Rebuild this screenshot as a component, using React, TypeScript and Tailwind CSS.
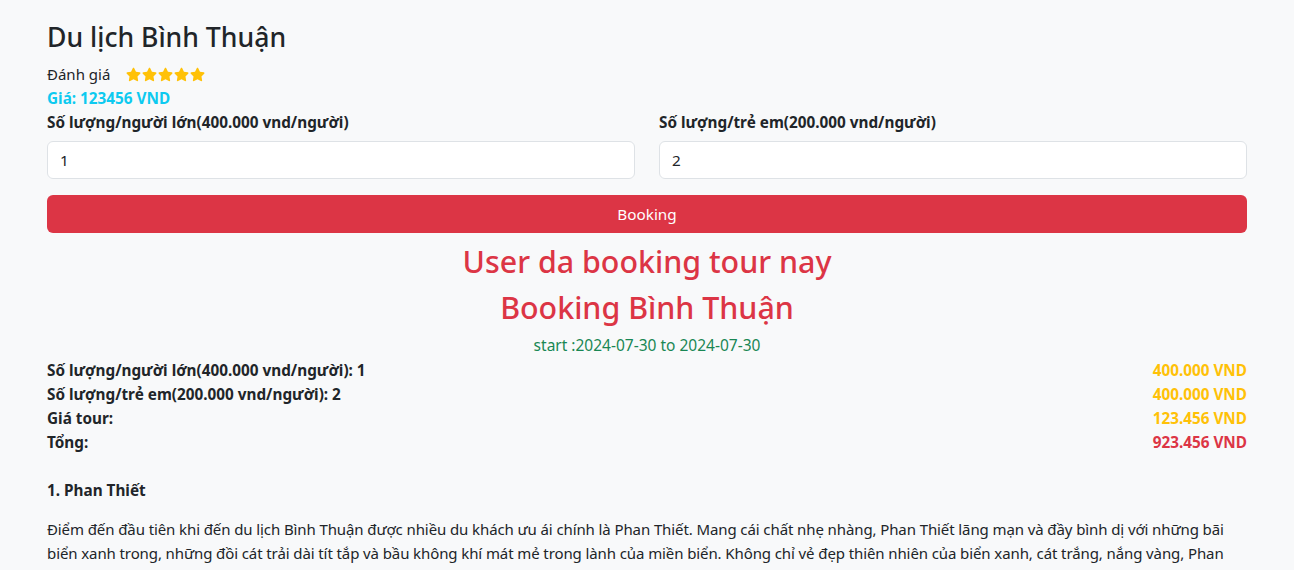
import { FaStar } from "react-icons/fa";

const rows = [
  { label: "Số lượng/người lớn(400.000 vnd/người): 1", value: "400.000 VND", color: "text-[#ffc107]" },
  { label: "Số lượng/trẻ em(200.000 vnd/người): 2", value: "400.000 VND", color: "text-[#ffc107]" },
  { label: "Giá tour:", value: "123.456 VND", color: "text-[#ffc107]" },
  { label: "Tổng:", value: "923.456 VND", color: "text-[#dc3545]" },
];

const App = () => {
  return (
    <div className="min-h-[570px] bg-[#f8f9fa] text-[#212529] font-['Noto_Sans',sans-serif] text-[15.3px] leading-[24px]">
      <div className="w-[1200px] mx-auto pt-[19px]">
        <h3 className="text-[26.6px] leading-[36px] font-medium">Du lịch Bình Thuận</h3>
        <div className="flex items-center gap-[16px] mt-[7px]">
          <span className="text-[15px]">Đánh giá</span>
          <div className="flex text-[#ffc107] text-[15px] gap-[1px]">
            {[0, 1, 2, 3, 4].map((i) => (
              <FaStar key={i} />
            ))}
          </div>
        </div>
        <div className="font-bold text-[#0dcaf0]">Giá: 123456 VND</div>
        <div className="grid grid-cols-2 gap-6">
          <div>
            <label className="font-bold block">Số lượng/người lớn(400.000 vnd/người)</label>
            <input
              className="mt-[7px] w-full h-[38px] bg-white border border-[#dee2e6] rounded-[6px] px-3 outline-none"
              defaultValue="1"
            />
          </div>
          <div>
            <label className="font-bold block">Số lượng/trẻ em(200.000 vnd/người)</label>
            <input
              className="mt-[7px] w-full h-[38px] bg-white border border-[#dee2e6] rounded-[6px] px-3 outline-none"
              defaultValue="2"
            />
          </div>
        </div>
        <button className="mt-4 w-full h-[38px] bg-[#dc3545] text-white rounded-[6px]">Booking</button>
        <div className="text-center text-[#dc3545] text-[30.4px] leading-[46px] font-medium mt-[6px]">
          <div>User da booking tour nay</div>
          <div>Booking Bình Thuận</div>
        </div>
        <div className="text-center text-[#198754] text-[15.5px] mt-[2px]">start :2024-07-30 to 2024-07-30</div>
        <div className="font-bold mt-[1px]">
          {rows.map((r) => (
            <div key={r.label} className="flex justify-between">
              <span>{r.label}</span>
              <span className={r.color}>{r.value}</span>
            </div>
          ))}
        </div>
        <div className="font-bold mt-[24px]">1. Phan Thiết</div>
        <p className="mt-[15px] leading-[24px] text-[15px] tracking-[-0.1px]">
          Điểm đến đầu tiên khi đến du lịch Bình Thuận được nhiều du khách ưu ái chính là Phan Thiết. Mang cái chất nhẹ
          nhàng, Phan Thiết lãng mạn và đầy bình dị với những bãi biển xanh trong, những đồi cát trải dài tít tắp và bầu
          không khí mát mẻ trong lành của miền biển. Không chỉ vẻ đẹp thiên nhiên của biển xanh, cát trắng, nắng vàng, Phan
          Thiết còn nổi tiếng với nhiều món ăn đặc sản hấp dẫn.
        </p>
      </div>
    </div>
  );
};

export default App;
